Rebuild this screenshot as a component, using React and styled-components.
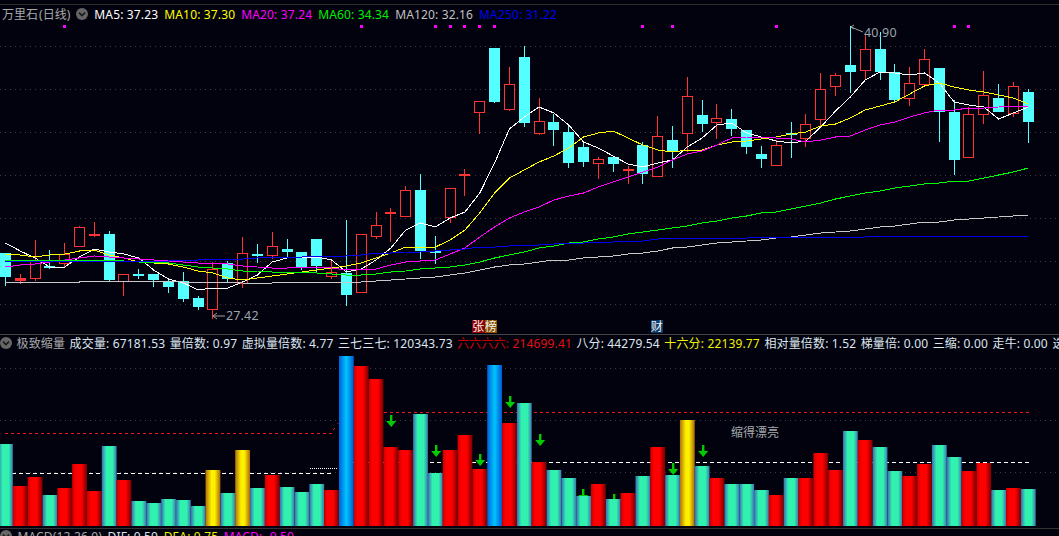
import styled, { createGlobalStyle } from 'styled-components';

const GlobalStyle = createGlobalStyle`
  html, body {
    margin: 0;
    padding: 0;
    background: #02020e;
  }
`;

const Page = styled.div`
  width: 1059px;
  height: 536px;
  padding-top: 4px;
  box-sizing: border-box;
  overflow: hidden;
  background: #02020e;
  display: flex;
  flex-direction: column;
  font-family: "Noto Sans", "Noto Sans CJK SC", sans-serif;
  font-size: 12px;
  letter-spacing: 0.15px;
`;

const Pane = styled.section`
  position: relative;
  flex: none;
  height: ${props => props.$height}px;
  border-top: 1px solid ${props => props.$rule || '#333'};
  display: flex;
  flex-direction: column;
  overflow: hidden;
`;

const Legend = styled.div`
  flex: none;
  height: ${props => props.$height || 18}px;
  box-sizing: border-box;
  padding-bottom: ${props => props.$lift || 0}px;
  display: flex;
  align-items: center;
  gap: ${props => props.$gap || 6}px;
  white-space: nowrap;
`;

const PaneTitle = styled.span`
  color: #a9a9a9;
  margin-left: ${props => props.$indent || 0}px;
`;

const ChartName = styled(PaneTitle)`
  letter-spacing: 0;
  word-spacing: -2px;
`;

const LegendItem = styled.span`
  color: ${props => props.$color || '#dde6ee'};
`;

const LegendLabel = styled.span`
  color: ${props => props.$color};
`;

const CollapseIcon = styled.svg`
  flex: none;
  width: 12px;
  height: 12px;
`;

const Chart = styled.svg`
  display: block;
  flex: 1;
  width: 1059px;
`;

const Tag = styled.span`
  position: absolute;
  top: ${props => props.$top}px;
  left: ${props => props.$left}px;
  width: 12.5px;
  height: 13px;
  line-height: 13px;
  text-align: center;
  font-size: 12px;
  letter-spacing: 0;
  color: #f2f2f2;
  background: ${props => props.$bg};
`;

const Note = styled.span`
  position: absolute;
  top: 88px;
  left: 731px;
  color: #a4a8ac;
  letter-spacing: 0;
`;

// candle: [high, body top, body bottom, low, up?]
const candles = [
  [253, 253, 277, 286, 0], [274, 278, 281, 284, 1], [240, 261, 278, 281, 1], [250, 266, 268, 269, 0],
  [243, 254, 263, 267, 1], [226, 227, 246, 247, 1], [222, 234, 236, 237, 1], [231, 234, 280, 281, 0],
  [274, 274, 281, 296, 1], [269, 274, 276, 279, 0], [274, 274, 280, 287, 0], [279, 282, 287, 293, 0],
  [272, 281, 299, 302, 0], [296, 298, 307, 310, 0], [262, 269, 309, 319, 1], [261, 263, 279, 283, 0],
  [237, 253, 283, 288, 1], [244, 254, 256, 263, 0], [232, 246, 255, 259, 1], [239, 249, 252, 258, 0],
  [252, 252, 268, 270, 0], [239, 239, 266, 273, 0], [260, 272, 276, 279, 1], [220, 273, 295, 306, 0],
  [234, 234, 292, 292, 1], [212, 225, 236, 239, 1], [208, 212, 214, 242, 1], [186, 190, 216, 216, 1],
  [174, 190, 251, 259, 0], [236, 251, 253, 264, 0], [188, 188, 217, 223, 1], [169, 174, 176, 196, 1],
  [101, 101, 112, 134, 1], [48, 48, 102, 103, 0], [67, 84, 109, 111, 1], [46, 57, 123, 127, 0],
  [98, 121, 133, 135, 1], [114, 122, 130, 146, 0], [124, 132, 163, 168, 0], [143, 147, 162, 167, 0],
  [157, 159, 163, 179, 1], [157, 157, 164, 172, 0], [166, 169, 171, 184, 1], [142, 145, 174, 184, 0],
  [116, 136, 176, 176, 1], [126, 140, 152, 168, 0], [77, 96, 133, 152, 1], [100, 115, 124, 132, 0],
  [104, 118, 122, 139, 1], [109, 119, 129, 136, 0], [130, 130, 147, 154, 0], [146, 154, 159, 168, 0],
  [140, 145, 165, 165, 1], [122, 133, 135, 158, 0], [114, 124, 138, 147, 1], [73, 89, 119, 128, 1],
  [73, 75, 86, 96, 1], [26, 65, 72, 93, 0], [35, 49, 70, 79, 1], [32, 49, 72, 80, 0],
  [64, 72, 100, 103, 0], [67, 83, 98, 106, 1], [49, 59, 84, 84, 1], [68, 68, 112, 142, 0],
  [100, 112, 160, 175, 0], [107, 114, 157, 157, 1], [71, 95, 114, 124, 1], [84, 98, 112, 112, 0],
  [82, 86, 113, 117, 1], [89, 92, 122, 143, 0],
];

const averages = [
  { color: '#ffffff', points: [243, 251, 258, 267, 267, 257, 249, 252, 254, 258, 270, 279, 283, 290, 288, 288, 282, 275, 262, 258, 257, 257, 260, 272, 269, 260, 248, 230, 223, 227, 218, 212, 193, 163, 129, 117, 107, 113, 125, 142, 148, 156, 164, 167, 163, 160, 147, 138, 125, 123, 133, 137, 141, 143, 141, 127, 111, 97, 80, 72, 73, 75, 73, 83, 102, 105, 107, 119, 113, 107] },
  { color: '#ffff00', points: [254, 255, 257, 255, 254, 251, 250, 255, 258, 262, 263, 264, 267, 271, 273, 278, 280, 278, 276, 274, 272, 270, 268, 266, 263, 258, 253, 247, 247, 247, 240, 230, 213, 193, 178, 170, 162, 156, 148, 137, 133, 131, 138, 145, 150, 152, 150, 150, 145, 142, 141, 139, 137, 134, 132, 126, 124, 118, 110, 106, 102, 94, 86, 83, 87, 90, 92, 95, 98, 104] },
  { color: '#ff00ff', points: [267, 265, 264, 262, 260, 258, 256, 257, 258, 259, 260, 261, 262, 263, 263, 264, 266, 267, 268, 268, 267, 267, 268, 270, 269, 269, 265, 262, 261, 260, 254, 248, 237, 227, 218, 212, 207, 200, 196, 193, 187, 182, 177, 172, 167, 160, 154, 151, 145, 138, 137, 137, 138, 139, 142, 140, 137, 136, 130, 125, 122, 117, 113, 110, 110, 108, 108, 107, 106, 106] },
  { color: '#00ff00', points: [260, 260, 260, 260, 260, 260, 260, 260, 261, 262, 262, 263, 265, 267, 268, 269, 271, 271, 272, 272, 272, 273, 274, 275, 275, 274, 272, 271, 269, 268, 267, 265, 262, 258, 255, 252, 248, 246, 243, 242, 239, 237, 234, 232, 230, 228, 226, 223, 221, 218, 216, 213, 212, 209, 206, 203, 199, 196, 193, 191, 188, 186, 184, 183, 181, 181, 178, 175, 172, 168] },
  { color: '#c8c8c8', points: [282, 282, 282, 282, 282, 282, 281, 281, 281, 281, 281, 281, 282, 282, 282, 282, 283, 283, 283, 282, 282, 282, 282, 282, 282, 281, 280, 279, 278, 277, 275, 273, 270, 267, 265, 264, 262, 260, 260, 258, 257, 256, 254, 253, 251, 248, 247, 245, 243, 242, 241, 240, 238, 237, 235, 233, 232, 231, 229, 227, 226, 224, 222, 222, 220, 219, 218, 217, 216, 215] },
  { color: '#0000f0', points: [262, 261, 261, 261, 261, 261, 261, 261, 261, 261, 261, 261, 260, 260, 259, 259, 259, 258, 257, 257, 257, 256, 256, 256, 255, 253, 253, 252, 252, 251, 250, 249, 247, 247, 246, 245, 245, 244, 243, 243, 242, 242, 241, 241, 239, 238, 238, 238, 238, 238, 238, 237, 237, 237, 237, 237, 237, 237, 237, 236, 236, 236, 236, 236, 236, 236, 236, 236, 236, 236] },
];

const signalDots = [4, 24, 29, 30, 31, 32, 33, 43, 45, 52, 64, 65];

const volumeBars = [
  [444, 't'], [486, 'r'], [477, 'r'], [495, 't'], [488, 'r'], [464, 'r'], [491, 'r'], [446, 't'], [480, 'r'], [501, 't'],
  [503, 't'], [499, 't'], [500, 't'], [506, 't'], [470, 'g'], [493, 't'], [450, 'g'], [488, 't'], [475, 'r'], [487, 't'],
  [492, 't'], [484, 't'], [490, 'r'], [356, 'b'], [366, 'r'], [379, 'r'], [447, 'r'], [450, 'r'], [414, 't'], [473, 't'],
  [450, 'r'], [435, 'r'], [469, 'r'], [365, 'b'], [423, 'r'], [403, 't'], [462, 'r'], [470, 't'], [478, 't'], [496, 't'],
  [484, 'r'], [499, 't'], [493, 'r'], [476, 't'], [447, 'r'], [475, 't'], [420, 'g'], [466, 't'], [478, 'r'], [484, 't'],
  [484, 't'], [490, 't'], [495, 'r'], [478, 't'], [478, 'r'], [453, 'r'], [470, 'r'], [431, 't'], [440, 'r'], [447, 't'],
  [471, 't'], [476, 'r'], [464, 'r'], [445, 't'], [457, 't'], [471, 'r'], [463, 'r'], [490, 't'], [488, 'r'], [489, 't'],
];

const arrows = [[391, 415], [436, 445], [480, 454], [510, 396], [540, 434], [583, 489], [614, 494], [673, 463], [703, 445]];

const slot = i => -1.97 + 14.824 * i;
const centre = i => Math.floor(5.4 + 14.824 * i);

function Gradient({ id, stops }) {
  return (
    <linearGradient id={id} x1="0" x2="1" y1="0" y2="0">
      {stops.map(([at, color]) => <stop key={at} offset={at} stopColor={color} />)}
    </linearGradient>
  );
}

function Candle({ data, index }) {
  const [high, top, bottom, low, up] = data;
  const x = centre(index);
  const color = up ? '#ff3333' : '#54ffff';
  const hollow = up && bottom - top > 3;
  return (
    <g shapeRendering="crispEdges">
      <line x1={x + 0.5} x2={x + 0.5} y1={high} y2={low} stroke={color} />
      {hollow
        ? <rect x={x - 4.5} y={top + 0.5} width={10} height={bottom - top} fill="#02020e" stroke={color} />
        : <rect x={x - 5} y={top} width={11} height={Math.max(bottom - top, 1)} fill={color} />}
    </g>
  );
}

function PriceChart() {
  const gridRows = [46, 89, 132, 175, 218, 261, 304];
  return (
    <Chart viewBox="0 23 1059 311" height="311">
      {gridRows.map(y => (
        <line key={y} x1="0" x2="1059" y1={y + 0.5} y2={y + 0.5} stroke="#3c3c3c" strokeDasharray="1 4" />
      ))}
      {signalDots.map(i => <rect key={i} x={centre(i) - 1} y="25" width="3" height="3" fill="#ff00ff" />)}
      {candles.map((c, i) => <Candle key={i} data={c} index={i} />)}
      {averages.map(line => (
        <polyline
          key={line.color}
          fill="none"
          stroke={line.color}
          strokeWidth="1"
          shapeRendering="crispEdges"
          points={line.points.map((y, i) => `${5.4 + 14.824 * i},${y}`).join(' ')}
        />
      ))}
      <path d="M854 25 L851 27 L854 29 M851 27 L863 32" fill="none" stroke="#a0a0a0" />
      <text x="864" y="37" fill="#9aa4ac" fontSize="12.5">40.90</text>
      <path d="M217 313 L213 316 L217 319 M213 316 L225 316" fill="none" stroke="#a0a0a0" />
      <text x="226" y="320" fill="#9aa4ac" fontSize="12.5">27.42</text>
    </Chart>
  );
}

function VolumeArrow({ x, y }) {
  return (
    <path d={`M${x - 1} ${y} h2.4 v6 h3.8 l-5 6 l-5 -6 h3.8 z`} fill="#00cc00" />
  );
}

function VolumeChart() {
  const gridRows = [368, 420, 472];
  return (
    <Chart viewBox="0 353 1059 175" height="175">
      <defs>
        <Gradient id="bar-t" stops={[[0, '#3c68b4'], [0.3, '#30f2ae'], [0.72, '#30f2ae'], [1, '#3c78b4']]} />
        <Gradient id="bar-r" stops={[[0, '#c80000'], [0.25, '#ff0000'], [0.62, '#ff0000'], [1, '#780000']]} />
        <Gradient id="bar-g" stops={[[0, '#b0720c'], [0.4, '#fff000'], [0.62, '#fff000'], [1, '#a8680c']]} />
        <Gradient id="bar-b" stops={[[0, '#0060d8'], [0.5, '#00c4ff'], [1, '#0058d0']]} />
      </defs>
      {gridRows.map(y => (
        <line key={y} x1="0" x2="1059" y1={y + 0.5} y2={y + 0.5} stroke="#3c3c3c" strokeDasharray="1 4" />
      ))}
      <g stroke="#f01818" strokeDasharray="3 3" fill="none" shapeRendering="crispEdges">
        <path d="M5 433.5 H333" />
        <path d="M384 412.5 H1029" />
      </g>
      <path d="M333 430 L335 428 M338 423 V424" stroke="#e01818" fill="none" />
      <path d="M5 473.5 H334" stroke="#ffffff" strokeDasharray="4 3" fill="none" shapeRendering="crispEdges" />
      <path d="M310 468.5 H338" stroke="#ffffff" strokeDasharray="1 1" fill="none" shapeRendering="crispEdges" />
      <path d="M339 462.5 H1029" stroke="#ffffff" strokeDasharray="4 3" fill="none" shapeRendering="crispEdges" />
      {arrows.map(([x, y]) => <VolumeArrow key={x} x={x} y={y} />)}
      {volumeBars.map(([top, kind], i) => (
        <rect key={i} x={slot(i)} y={top} width="14.8" height={526 - top} fill={`url(#bar-${kind})`} />
      ))}
    </Chart>
  );
}

function Collapse() {
  return (
    <CollapseIcon viewBox="0 0 13 13">
      <circle cx="6.5" cy="6.5" r="6.5" fill="#666" />
      <path d="M3.2 5 L6.5 8.2 L9.8 5" fill="none" stroke="#1c1c1c" strokeWidth="1.8" />
    </CollapseIcon>
  );
}

export default function App() {
  return (
    <Page>
      <GlobalStyle />
      <Pane $height={329} $rule="#2c2c2c">
        <Legend>
          <ChartName $indent={2}>万里石 (日线)</ChartName>
          <Collapse />
          <LegendItem $color="#ffffff">MA5: 37.23</LegendItem>
          <LegendItem $color="#ffff00">MA10: 37.30</LegendItem>
          <LegendItem $color="#ff00ff">MA20: 37.24</LegendItem>
          <LegendItem $color="#00f000">MA60: 34.34</LegendItem>
          <LegendItem $color="#c0c0c0">MA120: 32.16</LegendItem>
          <LegendItem $color="#0000f0">MA250: 31.22</LegendItem>
        </Legend>
        <PriceChart />
        <Tag $left={472} $top={315} $bg="#8a0000">张</Tag>
        <Tag $left={484.5} $top={315} $bg="#8a5000">榜</Tag>
        <Tag $left={650.5} $top={315} $bg="#0a3a6a">财</Tag>
      </Pane>
      <Pane $height={193} $rule="#444">
        <Legend $gap={4.5} $lift={2}>
          <Collapse />
          <PaneTitle>极致缩量</PaneTitle>
          <LegendItem>成交量: 67181.53</LegendItem>
          <LegendItem>量倍数: 0.97</LegendItem>
          <LegendItem>虚拟量倍数: 4.77</LegendItem>
          <LegendItem>三七三七: 120343.73</LegendItem>
          <LegendItem $color="#e01010"><LegendLabel $color="#c80000">六六六六:</LegendLabel> 214699.41</LegendItem>
          <LegendItem>八分: 44279.54</LegendItem>
          <LegendItem $color="#f0f000">十六分: 22139.77</LegendItem>
          <LegendItem>相对量倍数: 1.52</LegendItem>
          <LegendItem>梯量倍: 0.00</LegendItem>
          <LegendItem>三缩: 0.00</LegendItem>
          <LegendItem>走牛: 0.00</LegendItem>
          <LegendItem>选</LegendItem>
        </Legend>
        <VolumeChart />
        <Note>缩得漂亮</Note>
      </Pane>
      <Pane $height={7} $rule="#333">
        <Legend $gap={5.5} $height={14}>
          <Collapse />
          <PaneTitle>MACD(12,26,9)</PaneTitle>
          <LegendItem>DIF: 0.50</LegendItem>
          <LegendItem $color="#f0f000">DEA: 0.75</LegendItem>
          <LegendItem $color="#ff00ff">MACD: -0.50</LegendItem>
        </Legend>
      </Pane>
    </Page>
  );
}
